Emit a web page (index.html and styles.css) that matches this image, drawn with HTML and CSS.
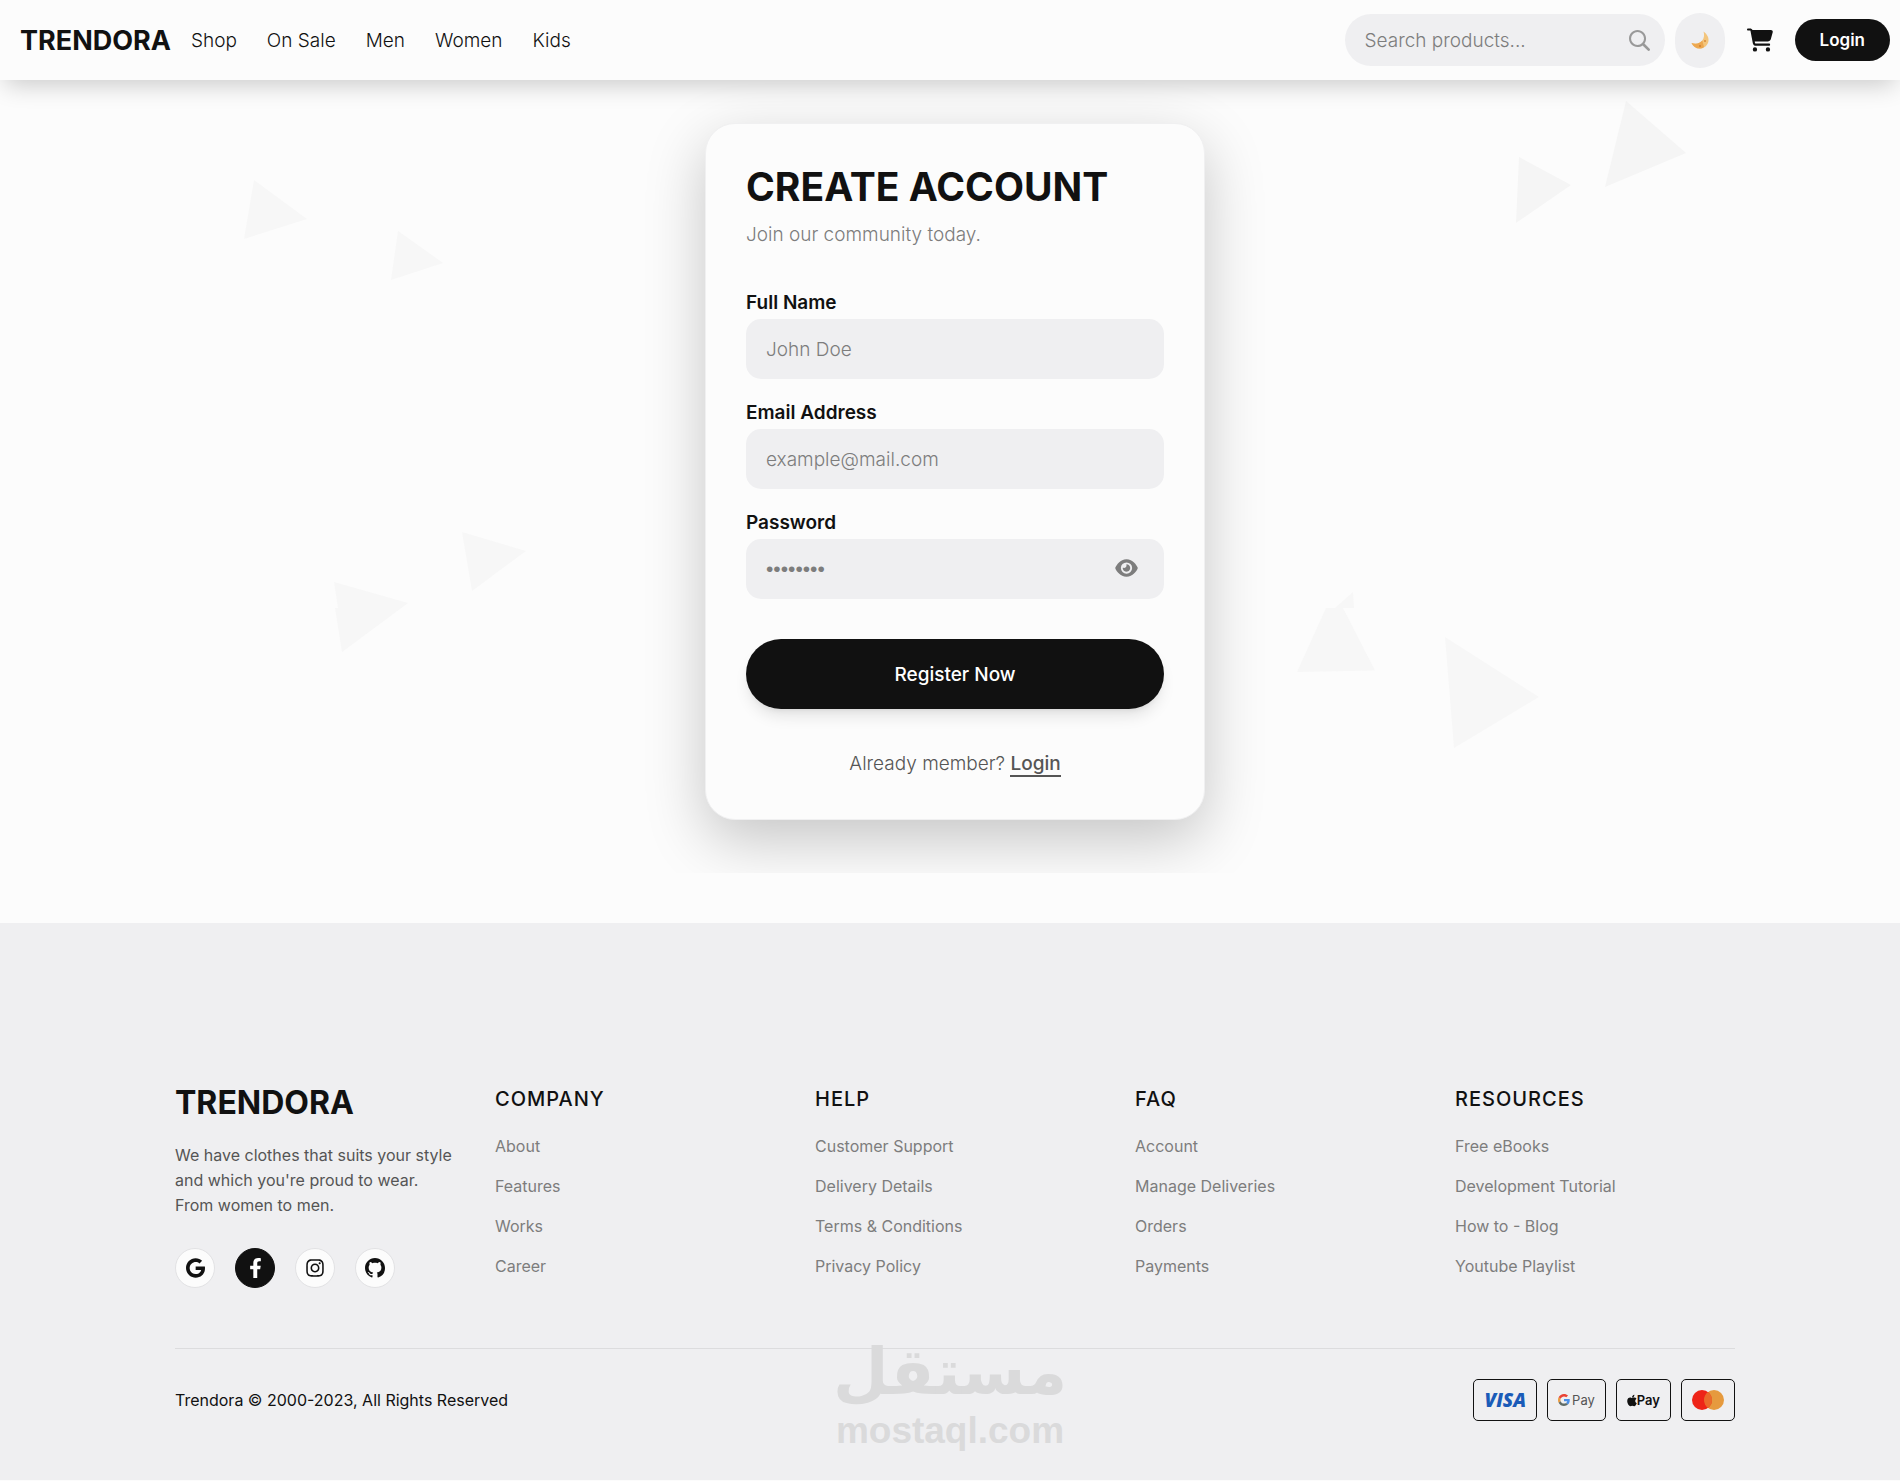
FILE: index.html
```html
<!DOCTYPE html>
<html lang="en">
<head>
    <meta charset="UTF-8">
    <meta name="viewport" content="width=device-width, initial-scale=1.0">
    <title>Trendora - Create Account</title>
    <link rel="stylesheet" href="styles.css">
</head>
<body>
    <header class="navbar">
        <a class="logo" href="#">TRENDORA</a>
        <nav class="nav-links">
            <a href="#">Shop</a>
            <a href="#">On Sale</a>
            <a href="#">Men</a>
            <a href="#">Women</a>
            <a href="#">Kids</a>
        </nav>
        <div class="nav-actions">
            <form class="search">
                <input type="search" placeholder="Search products..." aria-label="Search products">
                <button type="button" aria-label="Search">
                    <svg width="21" height="21" viewBox="0 0 512 512"><path d="M416 208c0 45.900-14.900 88.300-40 122.700L502.600 457.400c12.500 12.500 12.500 32.800 0 45.300s-32.800 12.500-45.300 0L330.700 376c-34.400 25.200-76.800 40-122.700 40C93.100 416 0 322.900 0 208S93.100 0 208 0S416 93.100 416 208zM208 366a158 158 0 1 0 0-316 158 158 0 1 0 0 316z"/></svg>
                </button>
            </form>
            <button class="theme-toggle" type="button" aria-label="Toggle theme">
                <svg width="18" height="18" viewBox="0 0 18 18">
                    <path fill="#f3c57c" d="M12.500 0.500C16 3 18 6.500 17.500 10C17 14.500 13 17.500 8.500 17.500C5 17.500 2 15.500 0.500 12C5 13.500 9 12.500 11.300 9.500C13.200 7 13.500 3.500 12.500 0.500z"/>
                    <path fill="#eda850" d="M0.500 12C5 13.500 9 12.500 11.300 9.500C12 12 12.500 14 13 16C12 17 10.500 17.500 8.500 17.500C5 17.500 2 15.500 0.500 12z"/>
                    <circle cx="14" cy="10" r="1" fill="#d98a3a"/>
                    <circle cx="9" cy="15" r="1" fill="#d07f30"/>
                </svg>
            </button>
            <a class="cart" href="#" aria-label="Cart">
                <svg width="26" height="24" viewBox="0 0 576 512"><path d="M0 24C0 10.700 10.700 0 24 0H69.500c22 0 41.500 12.800 50.600 32h411c26.300 0 45.500 25 38.600 50.400l-41 152.300c-8.500 31.400-37 53.300-69.500 53.300H170.700l5.400 28.500c2.200 11.300 12.100 19.500 23.600 19.500H488c13.300 0 24 10.700 24 24s-10.700 24-24 24H199.700c-34.600 0-64.300-24.600-70.700-58.500L77.400 54.500c-.7-3.800-4-6.500-7.900-6.500H24C10.700 48 0 37.300 0 24zM128 464a48 48 0 1 1 96 0 48 48 0 1 1-96 0zm336-48a48 48 0 1 1 0 96 48 48 0 1 1 0-96z"/></svg>
            </a>
            <button class="login-btn" type="button">Login</button>
        </div>
    </header>

    <main class="register">
        <svg class="triangles" viewBox="0 0 1900 793" aria-hidden="true">
            <g fill="#f5f5f5">
                <path d="M1626 21L1686 73L1605 107z"/>
                <path d="M1519 77L1571 105L1516 143z"/>
            </g>
            <g fill="#f7f7f7">
                <path d="M254 100L307 139L244 159z"/>
                <path d="M398 151L443 183L391 200z"/>
                <path d="M462 452L526 471L472 511z"/>
                <path d="M334 502L408 523L342 572L335 528H338z"/>
                <path d="M1326 528H1343L1375 590.500L1297 592z"/>
                <path d="M1353 512L1354 528H1335z"/>
                <path d="M1445 557L1539 617L1454 668z"/>
            </g>
        </svg>
        <form class="card">
            <h1>CREATE ACCOUNT</h1>
            <p class="subtitle">Join our community today.</p>

            <div class="field">
                <label for="name">Full Name</label>
                <input id="name" type="text" placeholder="John Doe">
            </div>
            <div class="field">
                <label for="email">Email Address</label>
                <input id="email" type="email" placeholder="example@mail.com">
            </div>
            <div class="field">
                <label for="password">Password</label>
                <div class="password-box">
                    <input id="password" type="password" placeholder="••••••••">
                    <button type="button" id="showPassword" aria-label="Show password">
                        <svg width="23" height="20" viewBox="0 0 576 512"><path d="M288 32c-80.800 0-145.500 36.800-192.600 80.600C48.600 156 17.300 208 2.500 243.700c-3.300 7.900-3.300 16.700 0 24.600C17.300 304 48.600 356 95.400 399.400C142.500 443.200 207.200 480 288 480s145.500-36.800 192.600-80.600c46.800-43.500 78.100-95.400 93-131.100c3.300-7.900 3.300-16.700 0-24.600c-14.900-35.700-46.200-87.700-93-131.100C433.500 68.800 368.800 32 288 32zM144 256a144 144 0 1 1 288 0 144 144 0 1 1-288 0zm144-64c0 35.300-28.700 64-64 64c-7.100 0-13.900-1.200-20.300-3.300c-5.500-1.800-11.900 1.600-11.700 7.400c.3 6.900 1.300 13.800 3.200 20.700c13.700 51.200 66.400 81.600 117.600 67.900s81.600-66.400 67.900-117.600c-11.100-41.500-47.800-69.400-88.600-71.100c-5.800-.2-9.200 6.100-7.400 11.700c2.100 6.400 3.300 13.200 3.300 20.300z"/></svg>
                    </button>
                </div>
            </div>

            <button class="register-btn" type="button">Register Now</button>
            <p class="member">Already member? <a href="#">Login</a></p>
        </form>
    </main>

    <footer class="footer">
        <div class="footer-grid">
            <div class="brand">
                <h2>TRENDORA</h2>
                <p>We have clothes that suits your style and which you're proud to wear. From women to men.</p>
                <div class="socials">
                    <a href="#" aria-label="Google">
                        <svg width="19" height="20" viewBox="0 0 488 512"><path d="M488 261.800C488 403.300 391.100 504 248 504 110.800 504 0 393.200 0 256S110.800 8 248 8c66.800 0 123 24.500 166.300 64.900l-67.500 64.900C258.500 52.600 94.300 116.600 94.300 256c0 86.500 69.100 156.600 153.700 156.600 98.200 0 135-70.400 140.800-106.900H248v-85.300h236.100c2.300 12.700 3.900 24.900 3.900 41.400z"/></svg>
                    </a>
                    <a class="active" href="#" aria-label="Facebook">
                        <svg width="13" height="20" viewBox="0 0 320 512"><path d="M279.140 288l14.220-92.660h-88.910v-60.130c0-25.350 12.420-50.060 52.240-50.060h40.420V6.260S260.430 0 225.360 0c-73.220 0-121.080 44.380-121.080 124.720v70.620H22.890V288h81.390v224h100.170V288z"/></svg>
                    </a>
                    <a href="#" aria-label="Instagram">
                        <svg width="18" height="20" viewBox="0 0 448 512"><path d="M224.100 141c-63.600 0-114.900 51.300-114.900 114.900s51.300 114.900 114.900 114.900S339 319.500 339 255.900 287.700 141 224.100 141zm0 189.600c-41.100 0-74.700-33.500-74.700-74.700s33.500-74.700 74.700-74.700 74.700 33.500 74.700 74.700-33.600 74.700-74.700 74.700zm146.400-194.300c0 14.900-12 26.800-26.800 26.800-14.900 0-26.800-12-26.800-26.800s12-26.800 26.800-26.800 26.800 12 26.800 26.800zm76.100 27.200c-1.700-35.900-9.900-67.700-36.200-93.900-26.200-26.200-58-34.400-93.900-36.200-37-2.100-147.900-2.100-184.900 0-35.800 1.700-67.600 9.900-93.900 36.100s-34.400 58-36.200 93.900c-2.100 37-2.100 147.900 0 184.900 1.700 35.900 9.900 67.700 36.200 93.900s58 34.400 93.900 36.200c37 2.100 147.900 2.100 184.900 0 35.900-1.700 67.700-9.900 93.900-36.200 26.200-26.200 34.400-58 36.200-93.900 2.100-37 2.100-147.800 0-184.800zM398.800 388c-7.800 19.600-22.900 34.700-42.600 42.600-29.500 11.700-99.500 9-132.100 9s-102.700 2.600-132.100-9c-19.600-7.800-34.700-22.900-42.600-42.600-11.700-29.500-9-99.500-9-132.100s-2.600-102.700 9-132.100c7.800-19.600 22.900-34.700 42.600-42.600 29.500-11.700 99.500-9 132.100-9s102.700-2.600 132.100 9c19.600 7.800 34.700 22.900 42.600 42.600 11.700 29.500 9 99.500 9 132.100s2.700 102.700-9 132.100z"/></svg>
                    </a>
                    <a href="#" aria-label="GitHub">
                        <svg width="20" height="20" viewBox="0 0 16 16"><path d="M8 0C3.580 0 0 3.580 0 8c0 3.540 2.290 6.530 5.470 7.590.4.070.55-.17.55-.38 0-.19-.01-.82-.01-1.490-2.010.37-2.530-.49-2.690-.94-.09-.23-.48-.94-.82-1.130-.28-.15-.68-.52-.01-.53.630-.01 1.080.58 1.230.82.720 1.210 1.870.87 2.330.66.070-.52.280-.87.510-1.070-1.780-.2-3.640-.89-3.640-3.950 0-.87.310-1.590.82-2.150-.08-.2-.36-1.020.08-2.120 0 0 .67-.21 2.200.82.640-.18 1.320-.27 2-.27s1.360.09 2 .27c1.530-1.040 2.200-.82 2.200-.82.440 1.100.160 1.920.08 2.120.510.56.82 1.270.82 2.150 0 3.070-1.870 3.750-3.650 3.950.290.25.540.73.540 1.480 0 1.070-.01 1.930-.01 2.200 0 .21.150.46.550.38A8.010 8.010 0 0 0 16 8c0-4.420-3.580-8-8-8z"/></svg>
                    </a>
                </div>
            </div>
            <div class="column">
                <h3>COMPANY</h3>
                <a href="#">About</a>
                <a href="#">Features</a>
                <a href="#">Works</a>
                <a href="#">Career</a>
            </div>
            <div class="column">
                <h3>HELP</h3>
                <a href="#">Customer Support</a>
                <a href="#">Delivery Details</a>
                <a href="#">Terms &amp; Conditions</a>
                <a href="#">Privacy Policy</a>
            </div>
            <div class="column">
                <h3>FAQ</h3>
                <a href="#">Account</a>
                <a href="#">Manage Deliveries</a>
                <a href="#">Orders</a>
                <a href="#">Payments</a>
            </div>
            <div class="column">
                <h3>RESOURCES</h3>
                <a href="#">Free eBooks</a>
                <a href="#">Development Tutorial</a>
                <a href="#">How to - Blog</a>
                <a href="#">Youtube Playlist</a>
            </div>
        </div>

        <div class="footer-bottom">
            <p>Trendora © 2000-2023, All Rights Reserved</p>
            <div class="payments">
                <span class="pay visa">VISA</span>
                <span class="pay gpay">
                    <svg width="12" height="12" viewBox="0 0 48 48">
                        <path fill="#ea4335" d="M24 9.500c3.540 0 6.710 1.220 9.210 3.600l6.850-6.850C35.900 2.380 30.470 0 24 0 14.620 0 6.510 5.380 2.560 13.220l7.980 6.190C12.430 13.720 17.740 9.500 24 9.500z"/>
                        <path fill="#4a8fe8" d="M46.980 24.550c0-1.570-.15-3.090-.38-4.550H24v9.020h12.940c-.58 2.960-2.260 5.480-4.780 7.180l7.730 6c4.510-4.180 7.090-10.360 7.090-17.650z"/>
                        <path fill="#e9993e" d="M10.530 28.590c-.48-1.450-.76-2.990-.76-4.590s.27-3.140.76-4.590l-7.980-6.190C.92 16.460 0 20.120 0 24c0 3.880.92 7.540 2.560 10.780l7.970-6.190z"/>
                        <path fill="#5f6b66" d="M24 48c6.480 0 11.930-2.130 15.890-5.810l-7.730-6c-2.150 1.450-4.920 2.300-8.160 2.300-6.260 0-11.570-4.220-13.470-9.910l-7.980 6.190C6.510 42.620 14.620 48 24 48z"/>
                    </svg>
                    Pay
                </span>
                <span class="pay apple">
                    <svg width="10" height="13" viewBox="0 0 384 512"><path d="M318.700 268.700c-.2-36.700 16.400-64.400 50-84.800-18.800-26.900-47.200-41.700-84.700-44.600-35.500-2.800-74.300 20.700-88.500 20.700-15 0-49.400-19.700-76.400-19.700C63.300 141.200 4 184.800 4 273.500q0 39.300 14.400 81.200c12.800 36.700 59 126.700 107.200 125.200 25.200-.6 43-17.900 75.800-17.900 31.800 0 48.300 17.900 76.400 17.900 48.600-.7 90.400-82.500 102.600-119.300-65.200-30.700-61.700-90-61.700-91.900zm-56.600-164.200c27.300-32.400 24.800-61.900 24-72.500-24.100 1.400-52 16.400-67.900 34.900-17.500 19.800-27.800 44.300-25.600 71.900 26.100 2 49.900-11.400 69.500-34.300z"/></svg>
                    Pay
                </span>
                <span class="pay mastercard">
                    <svg width="32" height="20" viewBox="0 0 32 20" role="img" aria-label="Mastercard">
                        <circle cx="22" cy="10" r="10" fill="#e69a3e"/>
                        <circle cx="10" cy="10" r="10" fill="#ee2418"/>
                        <path d="M16 2a10 10 0 0 1 0 16a10 10 0 0 1 0-16z" fill="#ea6a2a"/>
                    </svg>
                </span>
            </div>
        </div>

        <div class="watermark" aria-hidden="true">
            <span lang="ar" dir="rtl">مستقل</span>
            <span>mostaql.com</span>
        </div>
    </footer>

    <script>
        document.getElementById('showPassword').addEventListener('click', () => {
            const input = document.getElementById('password');
            input.type = input.type === 'password' ? 'text' : 'password';
        });
    </script>
</body>
</html>
```

FILE: styles.css
```css
:root {
    --bg: #fcfcfc;
    --soft: #efeff1;
    --dark: #111111;
    --grey: #7d7d7d;
    font-family: Inter, "Liberation Sans", sans-serif;
}

* {
    box-sizing: border-box;
    margin: 0;
    padding: 0;
}
body {
    background-color: var(--bg);
    color: var(--dark);
    font-size: 19px;
    font-weight: 300;
}
a {
    color: inherit;
    text-decoration: none;
}
button,
input {
    border: none;
    outline: none;
    background: none;
    font: inherit;
    color: inherit;
}
button {
    cursor: pointer;
}
input::placeholder {
    color: var(--grey);
    opacity: 1;
}
svg {
    display: block;
    fill: currentColor;
}

/* navbar */
.navbar {
    position: relative;
    z-index: 2;
    display: flex;
    align-items: center;
    gap: 20px;
    height: 80px;
    padding: 0 10px 0 20px;
    background-color: var(--bg);
    box-shadow: 0 10px 25px -5px rgba(0, 0, 0, 0.2);
}
.logo {
    font-size: 27px;
    font-weight: 700;
}
.nav-links {
    display: flex;
    gap: 30px;
}
.nav-actions {
    display: flex;
    align-items: center;
    margin-left: auto;
}
.search {
    display: flex;
    align-items: center;
    width: 320px;
    height: 52px;
    padding: 0 15px 0 20px;
    border-radius: 26px;
    background-color: var(--soft);
}
.search input {
    flex: 1;
    min-width: 0;
}
.search button {
    color: #999999;
}
.theme-toggle {
    display: grid;
    place-items: center;
    width: 50px;
    height: 55px;
    margin-left: 10px;
    border-radius: 25px;
    background-color: var(--soft);
}
.cart {
    margin: 0 22px;
}
.login-btn {
    padding: 0 25px;
    height: 42px;
    border-radius: 21px;
    background-color: var(--dark);
    color: white;
    font-size: 17px;
    font-weight: 600;
}

/* register form */
.register {
    position: relative;
    display: flex;
    justify-content: center;
    margin-bottom: 50px;
    padding: 43px 0 53px 10px;
    overflow: hidden;
}
.triangles {
    position: absolute;
    top: 0;
    left: 0;
    width: 100%;
}
.card {
    position: relative;
    width: 500px;
    padding: 40px;
    border: 1px solid #f0f0f1;
    border-radius: 30px;
    background-color: var(--bg);
    box-shadow: 0 20px 60px rgba(0, 0, 0, 0.22);
}
.card h1 {
    font-size: 39px;
    font-weight: 700;
    line-height: 46px;
}
.subtitle {
    margin: 11px 0 40px;
    color: var(--grey);
    line-height: 28px;
}
.field {
    margin-bottom: 20px;
}
.field label {
    display: block;
    padding-bottom: 3px;
    font-weight: 600;
    line-height: 27px;
}
.field input {
    display: block;
    width: 100%;
    height: 60px;
    padding: 0 20px;
    border-radius: 15px;
    background-color: var(--soft);
}
.password-box {
    position: relative;
}
.password-box input {
    font-family: "Liberation Sans", sans-serif;
    font-size: 21px;
}
.password-box button {
    position: absolute;
    top: 19px;
    right: 26px;
    color: var(--grey);
}
.register-btn {
    width: 100%;
    height: 70px;
    margin: 20px 0 40px;
    border-radius: 35px;
    background-color: var(--dark);
    color: white;
    font-weight: 500;
    box-shadow: 0 10px 15px -3px rgba(0, 0, 0, 0.1), 0 4px 6px -4px rgba(0, 0, 0, 0.1);
}
.member {
    text-align: center;
    color: #555555;
    line-height: 30px;
}
.member a {
    border-bottom: 2px solid;
    font-weight: 500;
}

/* footer */
.footer {
    position: relative;
    padding: 160px 165px 59px 175px;
    background-color: var(--soft);
}
.footer-grid {
    display: grid;
    grid-template-columns: repeat(5, 1fr);
    gap: 40px;
    padding-bottom: 60px;
    border-bottom: 1px solid #dcdcde;
    font-size: 16px;
    font-weight: 400;
}
.brand h2 {
    font-size: 32px;
    line-height: 40px;
    margin-bottom: 20px;
}
.brand p {
    color: #555555;
    line-height: 25px;
}
.socials {
    display: flex;
    gap: 20px;
    margin-top: 30px;
}
.socials a {
    display: grid;
    place-items: center;
    width: 40px;
    height: 40px;
    border: 1px solid #e2e2e4;
    border-radius: 50%;
    background-color: var(--bg);
}
.socials .active {
    border-color: var(--dark);
    background-color: var(--dark);
    color: white;
}
.column {
    display: flex;
    flex-direction: column;
    align-items: flex-start;
    gap: 15px;
}
.column h3 {
    margin-bottom: 4px;
    font-size: 20px;
    font-weight: 500;
    line-height: 32px;
    letter-spacing: 1px;
}
.column a {
    color: var(--grey);
    line-height: 25px;
}
.footer-bottom {
    display: flex;
    justify-content: space-between;
    align-items: center;
    padding-top: 30px;
    font-size: 16px;
    font-weight: 400;
}
.payments {
    display: flex;
    gap: 10px;
}
.pay {
    display: flex;
    align-items: center;
    justify-content: center;
    gap: 2px;
    height: 42px;
    padding: 0 10px;
    border: 1px solid var(--dark);
    border-radius: 5px;
    font-size: 13px;
}
.visa {
    color: #1a5bb8;
    font-family: "Open Sans", sans-serif;
    font-size: 19px;
    font-style: italic;
    font-weight: 800;
}
.gpay {
    color: #555555;
}
.apple {
    gap: 0;
    font-weight: 600;
}

/* stamp over the middle of the footer */
.watermark {
    position: absolute;
    left: 50%;
    bottom: 28px;
    display: flex;
    flex-direction: column;
    align-items: center;
    transform: translateX(-50%);
    color: #dadadb;
    font-family: "Liberation Sans", sans-serif;
    font-size: 37px;
    font-weight: 700;
    line-height: 42px;
}
.watermark span:first-child {
    font-family: "DejaVu Sans", sans-serif;
    font-size: 64px;
    line-height: 76px;
}
```
